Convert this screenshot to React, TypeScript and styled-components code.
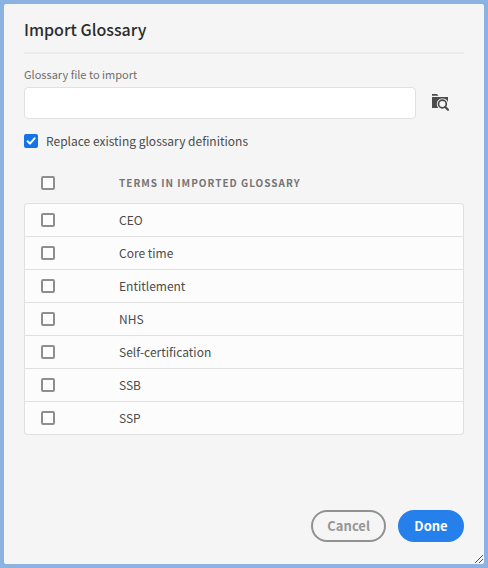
import React, { useState } from "react";
import styled, { createGlobalStyle } from "styled-components";

const GlobalStyle = createGlobalStyle`
  *, *::before, *::after { box-sizing: border-box; }
  body {
    margin: 0;
    background: #8cb2e3;
    color: #4b4b4b;
    font-family: "Noto Sans CJK SC", "Noto Sans", sans-serif;
    font-size: 12px;
    line-height: 20px;
  }
`;

const Backdrop = styled.div`
  display: flex;
  min-height: 100vh;
  padding: 4px;
`;

const Dialog = styled.form`
  position: relative;
  flex: 1;
  min-width: 0;
  display: flex;
  flex-direction: column;
  padding: 12px 20px 22px;
  background: #f5f5f5;
  border-radius: 2px;
`;

const Title = styled.h1`
  margin: 0 0 11px;
  padding-bottom: 10px;
  border-bottom: 2px solid #eaeaea;
  color: #2c2c2c;
  font-size: 16px;
  font-weight: 500;
  line-height: 26px;
`;

const FieldLabel = styled.label`
  margin-bottom: 4px;
  color: #6e6e6e;
  font-size: 11px;
  line-height: 18px;
`;

const FieldRow = styled.div`
  display: flex;
  gap: 8px;
`;

const TextField = styled.input`
  flex: 1;
  min-width: 0;
  height: 32px;
  padding: 0 12px;
  border: 1px solid #e1e1e1;
  border-radius: 4px;
  background: #fff;
  color: inherit;
  font: inherit;
`;

const IconButton = styled.button`
  display: flex;
  align-items: center;
  justify-content: center;
  width: 32px;
  height: 32px;
  margin-right: 8px;
  padding: 0;
  border: 0;
  background: none;
  color: #4b4b4b;
  cursor: pointer;
`;

const Checkbox = styled.input`
  appearance: none;
  display: block;
  flex: none;
  width: 14px;
  height: 14px;
  margin: 0;
  border: 2px solid #8e8e8e;
  border-radius: 2px;
  background: #fdfdfd center / 14px 14px no-repeat;

  &:checked {
    border-color: #1473e6;
    background-color: #1473e6;
    background-origin: border-box;
    background-image: url("data:image/svg+xml,%3Csvg xmlns='http://www.w3.org/2000/svg' viewBox='0 0 14 14'%3E%3Cpath d='M3.6 7.2 6 9.6 10.6 4.3' fill='none' stroke='white' stroke-width='2' stroke-linecap='round' stroke-linejoin='round'/%3E%3C/svg%3E");
  }
`;

const Option = styled.label`
  display: flex;
  align-items: center;
  align-self: flex-start;
  gap: 8px;
  margin-top: 12px;
`;

const Terms = styled.table`
  width: 100%;
  margin-top: 12px;
  border-collapse: separate;
  border-spacing: 0;
  table-layout: fixed;
`;

const HeadCell = styled.th<{ $select?: boolean }>`
  width: ${(p) => (p.$select ? "95px" : "auto")};
  height: 40px;
  padding: 0 0 0 ${(p) => (p.$select ? "17px" : "0")};
  color: #747474;
  font-size: 10px;
  font-weight: 700;
  letter-spacing: 1px;
  text-align: left;
  text-transform: uppercase;
`;

const Cell = styled.td`
  height: 33px;
  padding: 0;
  border-bottom: 1px solid #e0e0e0;
  background: #fcfcfc;

  &:first-child {
    padding-left: 16px;
    border-left: 1px solid #e0e0e0;
  }
  &:last-child {
    border-right: 1px solid #e0e0e0;
  }
  tr:first-child > & {
    height: 34px;
    border-top: 1px solid #e0e0e0;
  }
  tr:first-child > &:first-child { border-top-left-radius: 4px; }
  tr:first-child > &:last-child { border-top-right-radius: 4px; }
  tr:last-child > &:first-child { border-bottom-left-radius: 4px; }
  tr:last-child > &:last-child { border-bottom-right-radius: 4px; }
`;

const Footer = styled.footer`
  display: flex;
  justify-content: flex-end;
  gap: 12px;
  margin-top: auto;
  padding-top: 24px;
`;

const Button = styled.button<{ $primary?: boolean }>`
  min-width: 66px;
  height: 32px;
  padding: 0 14px;
  border: 2px solid ${(p) => (p.$primary ? "#2680eb" : "#919191")};
  border-radius: 16px;
  background: ${(p) => (p.$primary ? "#2680eb" : "transparent")};
  color: ${(p) => (p.$primary ? "#fff" : "#959595")};
  font: inherit;
  font-size: 13px;
  font-weight: 700;
  cursor: pointer;
`;

const ResizeGrip = styled.svg`
  position: absolute;
  right: 0;
  bottom: 0;
`;

const BrowseIcon = () => (
  <svg width="18" height="18" viewBox="0 0 18 18" aria-hidden="true">
    <path fill="currentColor" d="M1 0h5l1.5 1.7H1zM1 3h16v5.2A5.8 5.8 0 0 0 5.8 10 5.8 5.8 0 0 0 7.2 14H1z" />
    <circle cx="11.4" cy="10" r="3.9" fill="none" stroke="currentColor" strokeWidth="1.7" />
    <path d="m14.3 12.9 2.7 2.8" stroke="currentColor" strokeWidth="2.2" strokeLinecap="round" />
  </svg>
);

const TERMS = ["CEO", "Core time", "Entitlement", "NHS", "Self-certification", "SSB", "SSP"];

export default function App() {
  const [file, setFile] = useState("");
  const [replace, setReplace] = useState(true);
  const [selected, setSelected] = useState<string[]>([]);

  const toggle = (term: string) =>
    setSelected((now) => (now.includes(term) ? now.filter((t) => t !== term) : [...now, term]));

  return (
    <>
      <GlobalStyle />
      <Backdrop>
        <Dialog role="dialog" aria-labelledby="title" onSubmit={(e) => e.preventDefault()}>
          <Title id="title">Import Glossary</Title>
          <FieldLabel htmlFor="file">Glossary file to import</FieldLabel>
          <FieldRow>
            <TextField id="file" type="text" value={file} onChange={(e) => setFile(e.target.value)} />
            <IconButton type="button" aria-label="Browse">
              <BrowseIcon />
            </IconButton>
          </FieldRow>
          <Option>
            <Checkbox type="checkbox" checked={replace} onChange={() => setReplace(!replace)} />
            Replace existing glossary definitions
          </Option>
          <Terms>
            <thead>
              <tr>
                <HeadCell $select>
                  <Checkbox
                    type="checkbox"
                    aria-label="Select all terms"
                    checked={selected.length === TERMS.length}
                    onChange={() => setSelected(selected.length === TERMS.length ? [] : TERMS)}
                  />
                </HeadCell>
                <HeadCell>Terms in imported glossary</HeadCell>
              </tr>
            </thead>
            <tbody>
              {TERMS.map((term, i) => (
                <tr key={term}>
                  <Cell>
                    <Checkbox
                      id={`term-${i}`}
                      type="checkbox"
                      checked={selected.includes(term)}
                      onChange={() => toggle(term)}
                    />
                  </Cell>
                  <Cell>
                    <label htmlFor={`term-${i}`}>{term}</label>
                  </Cell>
                </tr>
              ))}
            </tbody>
          </Terms>
          <Footer>
            <Button type="button">Cancel</Button>
            <Button type="submit" $primary>Done</Button>
          </Footer>
          <ResizeGrip width="10" height="10" viewBox="0 0 10 10" aria-hidden="true">
            <path d="M1 9 9 1M5 9l4-4" stroke="#55505a" strokeWidth="1" />
          </ResizeGrip>
        </Dialog>
      </Backdrop>
    </>
  );
}
